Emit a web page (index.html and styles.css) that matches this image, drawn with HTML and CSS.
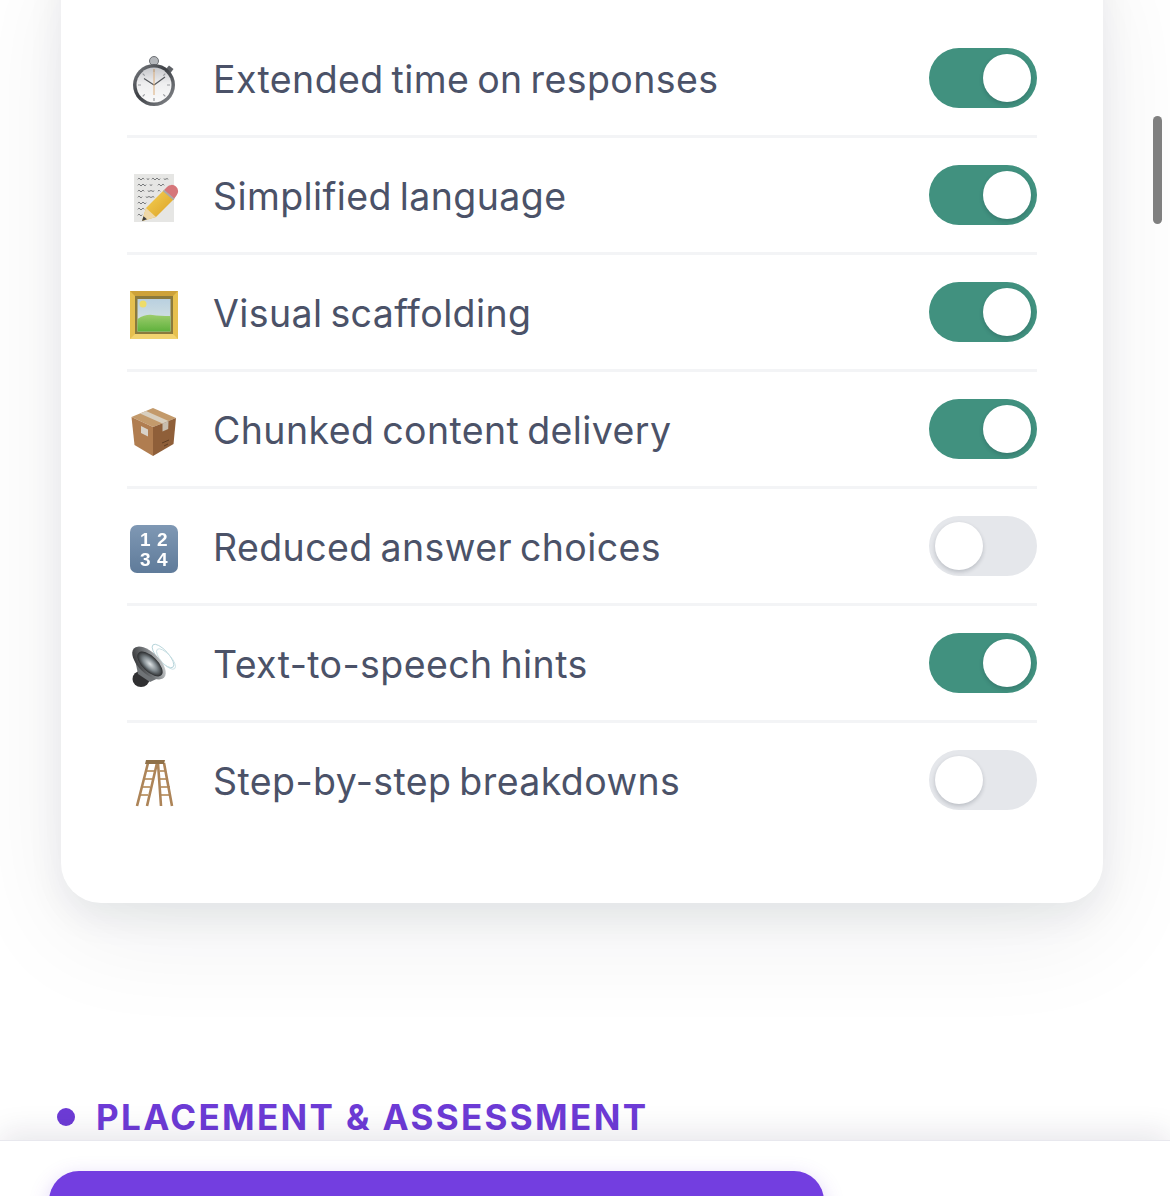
FILE: index.html
```html
<!DOCTYPE html>
<html lang="en">
<head>
<meta charset="utf-8">
<title>Accommodations</title>
<link rel="stylesheet" href="styles.css">
</head>
<body>
<main class="page">
  <section class="card">
    <ul class="list">
      <li class="row">
        <svg class="icon" viewBox="0 0 48 48">
          <defs>
            <linearGradient id="steel" x1="0" y1="0" x2="1" y2="1"><stop offset="0" stop-color="#7f8287"/><stop offset=".45" stop-color="#3c3f44"/><stop offset="1" stop-color="#8f9296"/></linearGradient>
            <linearGradient id="face" x1="0" y1="0" x2="0" y2="1"><stop offset="0" stop-color="#c6c7cb"/><stop offset=".45" stop-color="#eeeeef"/><stop offset="1" stop-color="#fafafa"/></linearGradient>
          </defs>
          <rect x="21" y="4" width="6" height="6" fill="#7d8084"/>
          <circle cx="24" cy="4" r="4.5" fill="#b4b7bb" stroke="#6c6f73" stroke-width="1"/>
          <path d="M36 12l3-3.5 4.500 3.500-3 4z" fill="#5f6267"/>
          <circle cx="24" cy="28" r="21" fill="url(#steel)"/>
          <circle cx="24" cy="28" r="17.5" fill="url(#face)"/>
          <g stroke="#9a9ca0" stroke-width="1.2"><path d="M24 12v3M24 41v3M8 28h3M37 28h3M12.700 16.700l2 2M35.300 16.700l-2 2M12.700 39.300l2-2M35.300 39.300l-2-2"/></g>
          <path d="M24 28L14 21.500M24 28L35 20" stroke="#55585c" stroke-width="1.2" fill="none"/>
          <path d="M24 12V38" stroke="#dcae7c" stroke-width="1"/>
        </svg>
        <span class="label">Extended time on responses</span>
        <span class="toggle is-on"><span class="knob"></span></span>
      </li>
      <li class="row">
        <svg class="icon" viewBox="0 0 48 48">
          <defs><linearGradient id="pencil" x1="0" y1="0" x2="1" y2="1"><stop offset="0" stop-color="#f7d65a"/><stop offset="1" stop-color="#d99c20"/></linearGradient></defs>
          <rect x="4" y="0" width="40" height="48" fill="#e6e6e4"/>
          <g stroke="#5b5d60" stroke-width=".8" fill="none" stroke-linecap="round">
            <path d="M8 5q1-2 2 0t2 0 2 0M17 5q1 1 2 0M22 5q1-2 2 0t2 0 2 0 2 0M34 5q1 1 2 0t2 0"/>
            <path d="M8 11q1-2 2 0t2 0 2 0 2 0M20 11q1 1 2 0M28 11q1-2 2 0t2 0 2 0"/>
            <path d="M8 17q1-2 2 0t2 0 2 0M18 17q1 1 2 0t2 0 2 0M28 17q1-2 2 0"/>
            <path d="M8 23q1-2 2 0t2 0M16 23q1 1 2 0t2 0 2 0 2 0"/>
            <path d="M8 29q1-2 2 0t2 0 2 0 2 0"/>
            <path d="M8 35q1-2 2 0t2 0 2 0"/>
            <path d="M8 41q1-2 2 0t2 0"/>
          </g>
          <path d="M12 47l4-13L34 16l10 9L26 43z" fill="url(#pencil)"/>
          <path d="M12 47l4-13 10 9z" fill="#efd8a8"/>
          <path d="M12 47l1.500-4.800 3.500 3.100z" fill="#3f3f3f"/>
          <path d="M34 16l3-3a6 6 0 019.500 8.500L44 25z" fill="#d6767a"/>
          <path d="M33.500 16.500l10.500 9" stroke="#a9a9a9" stroke-width="1.8"/>
        </svg>
        <span class="label">Simplified language</span>
        <span class="toggle is-on"><span class="knob"></span></span>
      </li>
      <li class="row">
        <svg class="icon" viewBox="0 0 48 48">
          <defs>
            <linearGradient id="sky" x1="0" y1="0" x2="0" y2="1"><stop offset="0" stop-color="#b9d0e0"/><stop offset="1" stop-color="#dfe8e2"/></linearGradient>
            <linearGradient id="grass" x1="0" y1="0" x2="0" y2="1"><stop offset="0" stop-color="#9ccc6c"/><stop offset="1" stop-color="#5fb13c"/></linearGradient>
          </defs>
          <rect width="48" height="48" fill="#e6c04f"/>
          <path d="M0 0h48l-5 5H5z" fill="#cda23a"/>
          <path d="M0 48h48l-5-5H5z" fill="#f2d36f"/>
          <rect x="5" y="5" width="38" height="38" fill="#8b7a3c"/>
          <rect x="7.5" y="8" width="33" height="32.5" fill="url(#sky)"/>
          <circle cx="13" cy="13" r="3.5" fill="#eddc6a"/>
          <path d="M7.500 28q8-5 15-4t18 1v15.500H7.500z" fill="url(#grass)"/>
        </svg>
        <span class="label">Visual scaffolding</span>
        <span class="toggle is-on"><span class="knob"></span></span>
      </li>
      <li class="row">
        <svg class="icon" viewBox="0 0 48 48">
          <path d="M23 0L46 10 23 19 1.500 9z" fill="#c39a6b"/>
          <path d="M1.500 9L23 19v29L4.500 37z" fill="#b07d50"/>
          <path d="M23 19l23-9-2.500 26L23 48z" fill="#8f5f39"/>
          <path d="M10 5.500L32.500 15.500l6-2.500L16 3z" fill="#d8cfbf"/>
          <path d="M32.500 15.500l6-2.500-.3 8-5.700 2.500z" fill="#c7bdae"/>
          <path d="M11 18l7 3.500v7l-7-3.500z" fill="#d8d2c8"/>
          <path d="M32 35l7-3M34 38l4-2" stroke="#5f3d22" stroke-width="1"/>
        </svg>
        <span class="label">Chunked content delivery</span>
        <span class="toggle is-on"><span class="knob"></span></span>
      </li>
      <li class="row">
        <svg class="icon" viewBox="0 0 48 48">
          <defs><linearGradient id="keycap" x1="0" y1="0" x2="0" y2="1"><stop offset="0" stop-color="#7f98b4"/><stop offset="1" stop-color="#5f7b9a"/></linearGradient></defs>
          <rect width="48" height="48" rx="7" fill="url(#keycap)"/>
          <text class="keycap-text" x="24" y="21">1 2</text>
          <text class="keycap-text" x="24" y="41">3 4</text>
        </svg>
        <span class="label">Reduced answer choices</span>
        <span class="toggle"><span class="knob"></span></span>
      </li>
      <li class="row">
        <svg class="icon" viewBox="0 0 48 48">
          <defs>
            <linearGradient id="cone" x1="0" y1="0" x2="1" y2="1"><stop offset="0" stop-color="#232325"/><stop offset=".55" stop-color="#7c8083"/><stop offset="1" stop-color="#e5e7e8"/></linearGradient>
            <radialGradient id="mouth"><stop offset="0" stop-color="#dfe4e6"/><stop offset=".55" stop-color="#80898e"/><stop offset="1" stop-color="#2a2c2e"/></radialGradient>
          </defs>
          <ellipse cx="33" cy="14" rx="5.5" ry="15" transform="rotate(-42 33 14)" fill="none" stroke="#b5d3d9" stroke-width=".9"/>
          <ellipse cx="36" cy="17" rx="5" ry="13" transform="rotate(-42 36 17)" fill="none" stroke="#c8dfe3" stroke-width=".9"/>
          <ellipse cx="11" cy="37" rx="8.5" ry="8" fill="#303032"/>
          <path d="M3 8L35 33 20 40 8 32z" fill="#6f7376"/>
          <ellipse cx="19" cy="21" rx="10.5" ry="21" transform="rotate(-46 19 21)" fill="url(#cone)"/>
          <ellipse cx="20" cy="22" rx="7.5" ry="16" transform="rotate(-46 20 22)" fill="url(#mouth)"/>
        </svg>
        <span class="label">Text-to-speech hints</span>
        <span class="toggle is-on"><span class="knob"></span></span>
      </li>
      <li class="row">
        <svg class="icon" viewBox="0 0 48 48">
          <g fill="none" stroke="#c2a077" stroke-width="2">
            <path d="M15 12h9M13 20h9M11 28h9M9 36h9M30 12h6M30 20h8M31 28h9M31 36h10"/>
          </g>
          <g fill="none" stroke="#ad8458" stroke-width="2.6">
            <path d="M18 4L7 47M27 4L17 47M28 4L31 47M34 4L42 47"/>
          </g>
          <path d="M16 1h19l-1 4H15z" fill="#8f7048"/>
        </svg>
        <span class="label">Step-by-step breakdowns</span>
        <span class="toggle"><span class="knob"></span></span>
      </li>
    </ul>
  </section>

  <h2 class="section-title"><span class="dot"></span>PLACEMENT &amp; ASSESSMENT</h2>
</main>

<div class="scrollbar"></div>

<footer class="bottom-bar">
  <div class="primary-button"></div>
</footer>
</body>
</html>
```

FILE: styles.css
```css
* {
  box-sizing: border-box;
}

html,
body {
  margin: 0;
  height: 1196px;
  overflow: hidden;
  background: #ffffff;
  font-family: "Inter", "Liberation Sans", sans-serif;
}

.page {
  padding: 0 67px 0 61px;
}

.card {
  margin-top: -60px;
  padding: 81px 66px 63px;
  background: #ffffff;
  border-radius: 40px;
  box-shadow: 0 14px 36px rgba(17, 24, 39, 0.07), 0 30px 110px rgba(17, 24, 39, 0.07);
}

.list {
  margin: 0;
  padding: 0;
  list-style: none;
}

.row {
  display: flex;
  align-items: center;
  height: 117px;
  padding-left: 3px;
  border-bottom: 3px solid #f3f4f6;
}

.row:last-child {
  border-bottom-color: transparent;
}

.icon {
  flex: none;
  width: 48px;
  height: 48px;
  margin-top: 6px;
  overflow: visible;
  filter: blur(0.4px);
}

.keycap-text {
  fill: #ffffff;
  font-family: "Liberation Sans", sans-serif;
  font-size: 19px;
  font-weight: 700;
  letter-spacing: 0.5px;
  text-anchor: middle;
}

.label {
  flex: 1;
  margin-top: 2px;
  margin-left: 35px;
  font-size: 37.5px;
  font-weight: 400;
  color: #4b5268;
  letter-spacing: 0.4px;
  word-spacing: -3px;
}

.toggle {
  flex: none;
  display: flex;
  align-items: center;
  width: 108px;
  height: 60px;
  padding: 6px;
  border-radius: 30px;
  background: #e5e7eb;
}

.toggle.is-on {
  justify-content: flex-end;
  background: #41917f;
}

.knob {
  width: 48px;
  height: 48px;
  border-radius: 50%;
  background: #ffffff;
  box-shadow: 0 2px 4px rgba(17, 24, 39, 0.2);
}

.section-title {
  display: flex;
  align-items: center;
  margin: 192px 0 0 -4px;
  font-size: 35px;
  font-weight: 700;
  line-height: 44px;
  letter-spacing: 2.35px;
  color: #6d3bd6;
}

.dot {
  width: 18px;
  height: 18px;
  margin-right: 21px;
  border-radius: 50%;
  background: #6d3bd6;
}

.scrollbar {
  position: fixed;
  top: 116px;
  right: 8px;
  width: 9px;
  height: 108px;
  border-radius: 5px;
  background: #808080;
}

.bottom-bar {
  position: fixed;
  left: 0;
  right: 0;
  bottom: 0;
  height: 56px;
  padding: 30px 346px 0 49px;
  background: #ffffff;
  border-top: 1px solid #e8e8ee;
  box-shadow: 0 -8px 30px rgba(30, 20, 60, 0.1);
}

.primary-button {
  height: 60px;
  border-radius: 30px;
  background: #733ee0;
  box-shadow: 0 6px 20px rgba(115, 62, 224, 0.25);
}
```
